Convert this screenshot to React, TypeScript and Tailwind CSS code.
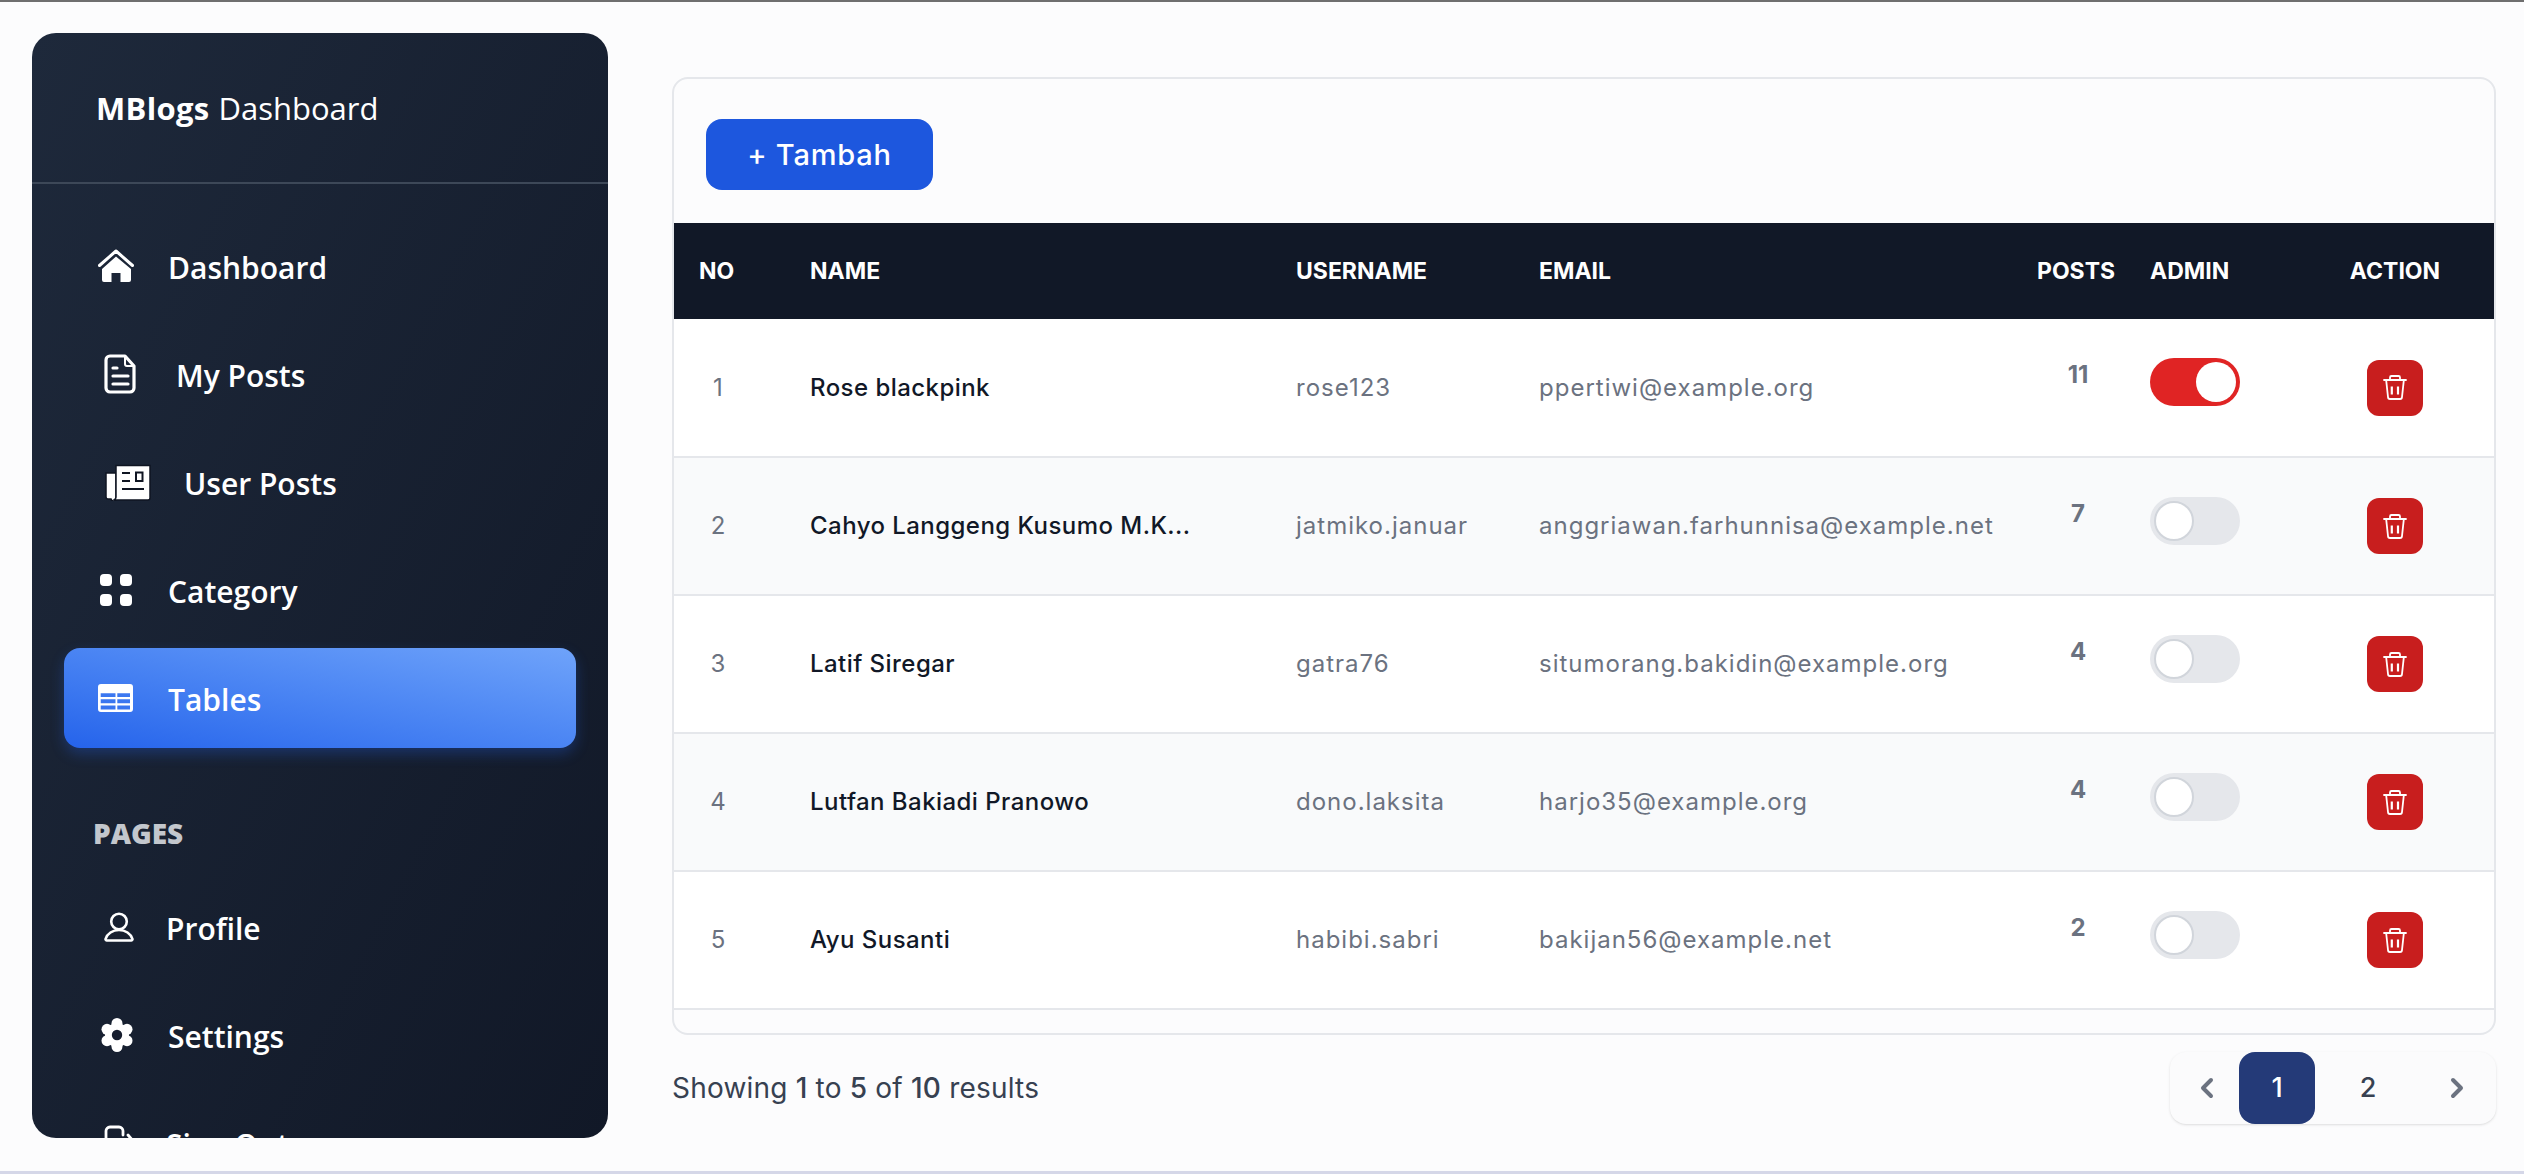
import { LuChevronLeft, LuChevronRight } from "react-icons/lu"

const users = [
  { no: 1, name: "Rose blackpink", username: "rose123", email: "ppertiwi@example.org", posts: 11, admin: true },
  { no: 2, name: "Cahyo Langgeng Kusumo M.K...", username: "jatmiko.januar", email: "anggriawan.farhunnisa@example.net", posts: 7, admin: false },
  { no: 3, name: "Latif Siregar", username: "gatra76", email: "situmorang.bakidin@example.org", posts: 4, admin: false },
  { no: 4, name: "Lutfan Bakiadi Pranowo", username: "dono.laksita", email: "harjo35@example.org", posts: 4, admin: false },
  { no: 5, name: "Ayu Susanti", username: "habibi.sabri", email: "bakijan56@example.net", posts: 2, admin: false },
]

function HomeIcon() {
  return (
    <svg width="36" height="34" viewBox="0 0 36 34" className="shrink-0">
      <path d="M1.5 16.5 18 2l16.5 14.5" fill="none" stroke="white" strokeWidth="3" strokeLinecap="round" strokeLinejoin="round" />
      <path d="M18 7.5 33 20v11a2 2 0 0 1-2 2h-8.5v-9h-9v9H6a2 2 0 0 1-2-2V20Z" fill="white" />
    </svg>
  )
}

function FileIcon() {
  return (
    <svg width="32" height="40" viewBox="0 0 32 40" fill="none" stroke="white" strokeWidth="3.2" strokeLinecap="round" strokeLinejoin="round" className="ml-[6px] shrink-0">
      <path d="M6 2h15l9 10v22a4 4 0 0 1-4 4H6a4 4 0 0 1-4-4V6a4 4 0 0 1 4-4Z" />
      <path d="M21 3v7a2 2 0 0 0 2 2h6" strokeWidth="2" />
      <path d="M9 14h4M9 22h15M9 30h15" />
    </svg>
  )
}

function NewsIcon() {
  return (
    <svg width="46" height="37" viewBox="0 0 46 37" className="ml-[7px] shrink-0">
      <path d="M1 9h10v25a2.5 2.5 0 0 1-5 1H3a2 2 0 0 1-2-2Z" fill="white" stroke="#0f1522" strokeWidth="1.5" />
      <path d="M11 1.5h34V34a2 2 0 0 1-2 2H8.5c1.500-.5 2.500-1.500 2.500-3Z" fill="white" stroke="#0f1522" strokeWidth="1.5" />
      <path d="M17 9h8M17 17h8M17 25h22" stroke="#0f1522" strokeWidth="2" fill="none" />
      <rect x="31" y="8.500" width="6.500" height="8.500" fill="none" stroke="#0f1522" strokeWidth="2" />
    </svg>
  )
}

function GridIcon() {
  return (
    <svg width="32" height="32" viewBox="0 0 32 32" fill="white" className="ml-[2px] shrink-0">
      <rect width="12" height="12" rx="4" />
      <rect x="20" width="12" height="12" rx="4" />
      <rect y="20" width="12" height="12" rx="4" />
      <rect x="20" y="20" width="12" height="12" rx="4" />
    </svg>
  )
}

function TableIcon() {
  return (
    <svg width="35" height="28" viewBox="0 0 35 28" className="shrink-0">
      <path
        fillRule="evenodd"
        fill="white"
        d="M3 0h29a3 3 0 0 1 3 3v22a3 3 0 0 1-3 3H3a3 3 0 0 1-3-3V3a3 3 0 0 1 3-3ZM2.700 9.300V13h14.800V9.300ZM19.300 9.300V13H32V9.300ZM2.700 15.300v4h14.800v-4ZM19.300 15.300v4H32v-4ZM2.700 21.500v4h14.800v-4ZM19.300 21.500v4H32v-4Z"
      />
    </svg>
  )
}

function UserIcon() {
  return (
    <svg width="30" height="30" viewBox="0 0 30 30" fill="none" stroke="white" strokeWidth="2.600" strokeLinejoin="round" className="ml-[6px] shrink-0">
      <circle cx="15" cy="9.500" r="7.800" />
      <path d="M3 28.500a1.300 1.300 0 0 1-1.400-1.700C3.300 21.800 8.500 18 15 18s11.700 3.800 13.400 8.800a1.300 1.300 0 0 1-1.400 1.700Z" />
    </svg>
  )
}

function GearIcon() {
  return (
    <svg width="32" height="34" viewBox="0 0 32 34" fill="white" className="ml-[3px] shrink-0">
      <circle cx="16" cy="17" r="12" />
      <circle cx="16" cy="5.500" r="5.500" />
      <circle cx="16" cy="28.500" r="5.500" />
      <circle cx="26" cy="11.300" r="5.500" />
      <circle cx="6" cy="11.300" r="5.500" />
      <circle cx="26" cy="22.700" r="5.500" />
      <circle cx="6" cy="22.700" r="5.500" />
      <circle cx="16" cy="17" r="5.200" fill="#161d2e" />
    </svg>
  )
}

function LogoutIcon() {
  return (
    <svg width="32" height="36" viewBox="0 0 32 36" fill="none" stroke="white" strokeWidth="2.800" strokeLinecap="round" strokeLinejoin="round" className="ml-[6px] shrink-0">
      <path d="M18 32H6a4 4 0 0 1-4-4V6a4 4 0 0 1 4-4h9a4 4 0 0 1 4 4v4" />
      <path d="M24 10l6 7-6 7M10 17h20" />
    </svg>
  )
}

function TrashIcon() {
  return (
    <svg width="24" height="25" viewBox="0 0 24 25" fill="none" stroke="white" strokeWidth="1.800" strokeLinecap="round" strokeLinejoin="round">
      <path d="M7 4.500V2.500A1.500 1.500 0 0 1 8.500 1h7A1.500 1.500 0 0 1 17 2.500v2" />
      <path d="M1 5h22" />
      <path d="M3.200 5.500 5 22a2 2 0 0 0 2 2h10a2 2 0 0 0 2-2l1.800-16.500" />
      <path d="M8.800 11.500V19.500M15 11.500V19.500" strokeWidth="2.200" strokeLinecap="butt" />
    </svg>
  )
}

function NavItem({ icon, label, textClass, active }: { icon: React.ReactNode; label: string; textClass: string; active?: boolean }) {
  return (
    <a
      className={
        "flex h-[100px] shrink-0 items-center rounded-2xl pl-[34px] text-[30px] font-semibold text-white " +
        (active ? "bg-gradient-to-tr from-[#2563eb] to-[#6fa3fa] shadow-[0_6px_14px_rgba(37,99,235,0.3)]" : "")
      }
    >
      {icon}
      <span className={"pt-[3px] " + textClass}>{label}</span>
    </a>
  )
}

function Sidebar() {
  return (
    <aside className="flex h-[1105px] w-[576px] shrink-0 flex-col overflow-hidden rounded-3xl bg-gradient-to-br from-[#1e293b] to-[#111827] font-['Open_Sans',sans-serif]">
      <div className="flex h-[151px] shrink-0 items-start border-b-2 border-[#3d4858] pl-[64px] pt-[50px] text-[31px] leading-[50px] text-white">
        <b className="font-bold tracking-[0.3px]">MBlogs</b>
        <span className="ml-[9px] font-medium">Dashboard</span>
      </div>
      <nav className="flex flex-col gap-2 px-8 pt-[32px]">
        <NavItem icon={<HomeIcon />} label="Dashboard" textClass="ml-[34px]" />
        <NavItem icon={<FileIcon />} label="My Posts" textClass="ml-[40px]" />
        <NavItem icon={<NewsIcon />} label="User Posts" textClass="ml-[33px]" />
        <NavItem icon={<GridIcon />} label="Category" textClass="ml-[36px]" />
        <NavItem icon={<TableIcon />} label="Tables" textClass="ml-[35px]" active />
        <div className="mt-[59px] mb-[18px] pl-[29px] text-[28px] leading-[36px] font-black text-[#c3c7cd]">PAGES</div>
        <NavItem icon={<UserIcon />} label="Profile" textClass="ml-[32px]" />
        <NavItem icon={<GearIcon />} label="Settings" textClass="ml-[35px]" />
        <NavItem icon={<LogoutIcon />} label="Sign Out" textClass="ml-[30px]" />
      </nav>
    </aside>
  )
}

function Toggle({ on }: { on: boolean }) {
  return (
    <div className={"flex h-[48px] w-[90px] items-center rounded-full px-[4px] " + (on ? "justify-end bg-[#e02424]" : "bg-[#e5e7eb]")}>
      <div className={"size-[40px] rounded-full bg-white " + (on ? "" : "border-2 border-[#d1d5db]")} />
    </div>
  )
}

function UserTable() {
  return (
    <table className="w-full table-fixed border-collapse text-[24px] font-['Inter',sans-serif]">
      <colgroup>
        <col className="w-[136px]" />
        <col className="w-[486px]" />
        <col className="w-[243px]" />
        <col className="w-[498px]" />
        <col className="w-[113px]" />
        <col className="w-[198px]" />
        <col />
      </colgroup>
      <thead className="bg-[#111827] text-[23px] font-extrabold text-white">
        <tr className="h-[96px]">
          <th className="pl-[25px] text-left">NO</th>
          <th className="text-left">NAME</th>
          <th className="text-left">USERNAME</th>
          <th className="text-left">EMAIL</th>
          <th className="text-left">POSTS</th>
          <th className="text-left">ADMIN</th>
          <th className="pr-[52px] text-center">ACTION</th>
        </tr>
      </thead>
      <tbody>
        {users.map((u) => (
          <tr key={u.no} className={"h-[138px] border-b-2 border-[#e5e7eb] " + (u.no % 2 === 0 ? "bg-[#f9fafb]" : "bg-white")}>
            <td className="pl-[26px] text-[#6b7280]">
              <span className="block w-[36px] text-center">{u.no}</span>
            </td>
            <td className="font-medium tracking-[0.45px] text-[#111827]">{u.name}</td>
            <td className="tracking-[1px] text-[#6b7280]">{u.username}</td>
            <td className="tracking-[1px] text-[#6b7280]">{u.email}</td>
            <td className="pb-[25px] pl-[3px] text-center font-bold text-[#6b7280]">
              <span className="block w-[76px]">{u.posts}</span>
            </td>
            <td className="pb-[11px]">
              <Toggle on={u.admin} />
            </td>
            <td className="pr-[52px]">
              <button className="mx-auto flex size-[56px] items-center justify-center rounded-xl bg-[#c81e1e]">
                <TrashIcon />
              </button>
            </td>
          </tr>
        ))}
      </tbody>
    </table>
  )
}

function Pagination() {
  return (
    <div className="flex h-[72px] w-[326px] items-center rounded-2xl bg-[#fbfbfc] text-[27px] font-medium shadow-sm">
      <span className="flex w-[69px] justify-center pl-[5px] text-[#6b7280]">
        <LuChevronLeft className="size-[32px]" strokeWidth={3} />
      </span>
      <span className="flex h-full w-[76px] items-center justify-center rounded-2xl bg-[#243a78] text-white">1</span>
      <span className="flex w-[84px] justify-center pl-[22px] text-[#374151]">2</span>
      <span className="flex w-[97px] justify-center pl-[19px] text-[#6b7280]">
        <LuChevronRight className="size-[32px]" strokeWidth={3} />
      </span>
    </div>
  )
}

export default function App() {
  return (
    <div className="flex h-[1174px] w-[2524px] gap-[64px] overflow-hidden border-t-2 border-b-[3px] border-t-[#6f6f6f] border-b-[#d5d7e8] bg-[#fcfcfd] pl-[32px] pt-[31px] font-['Inter',sans-serif]">
      <Sidebar />
      <main className="w-[1824px] pt-[44px]">
        <div className="h-[958px] overflow-hidden rounded-2xl border-2 border-[#e5e7eb]">
          <div className="flex h-[144px] items-start px-[32px] pt-[40px]">
            <button className="h-[71px] w-[227px] rounded-2xl bg-[#1d57de] text-[29px] font-medium tracking-[0.8px] text-white">+ Tambah</button>
          </div>
          <UserTable />
        </div>
        <div className="mt-[17px] flex items-center justify-between">
          <p className="text-[28px] tracking-[0.2px] text-[#374151]">
            Showing <span className="font-medium">1</span> to <span className="font-medium">5</span> of{" "}
            <span className="font-medium">10</span> results
          </p>
          <Pagination />
        </div>
      </main>
    </div>
  )
}
